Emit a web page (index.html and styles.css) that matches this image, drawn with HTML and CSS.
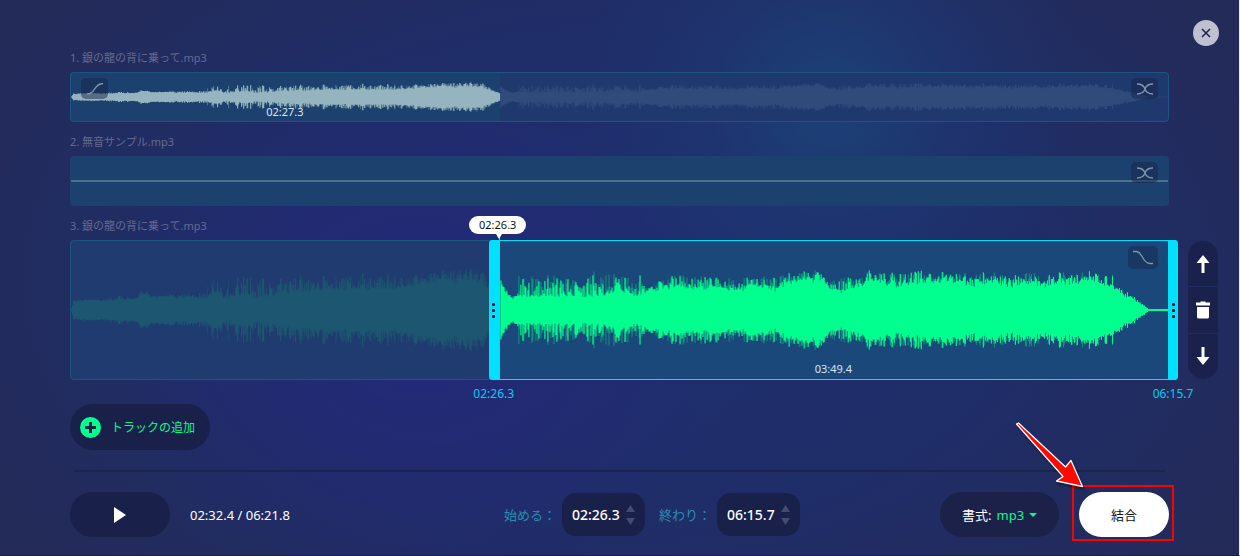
FILE: index.html
```html
<!DOCTYPE html>
<html lang="ja">
<head>
<meta charset="utf-8">
<title>Audio Joiner</title>
<link rel="stylesheet" href="styles.css">
</head>
<body>
<main class="editor">
  <button class="close" type="button" aria-label="閉じる">
    <svg width="10" height="10" viewBox="0 0 10 10"><path d="M1 1l8 8M9 1L1 9" stroke="#20264a" stroke-width="1.6" fill="none"/></svg>
  </button>

  <section class="track">
    <h2 class="track-title">1. 銀の龍の背に乗って.mp3</h2>
    <div class="clip clip-small clip-outlined">
      <div class="clip-part"></div>
      <svg class="wave" viewBox="0 0 1098 140" preserveAspectRatio="none" aria-hidden="true">
        <path class="wave-active-soft" data-from="1" data-to="430" data-peak="1"/>
        <path class="wave-active" data-from="1" data-to="430"/>
        <path class="wave-dim-soft" data-from="430" data-to="1098" data-peak="1"/>
        <path class="wave-dim" data-from="430" data-to="1098"/>
      </svg>
      <button class="fade fade-left" type="button" aria-label="フェードイン">
        <svg width="18" height="14" viewBox="0 0 18 14"><path d="M1 12c9 0 6-10 16-10.500"/></svg>
      </button>
      <button class="fade fade-right" type="button" aria-label="クロスフェード">
        <svg width="18" height="12" viewBox="0 0 18 12"><path d="M1 1c5 0 7 2 8 5s3 5 8 5M1 11c5 0 7-2 8-5s3-5 8-5"/></svg>
      </button>
      <span class="duration duration-part">02:27.3</span>
    </div>
  </section>

  <section class="track">
    <h2 class="track-title">2. 無音サンプル.mp3</h2>
    <div class="clip clip-small clip-silent">
      <div class="silence"></div>
      <button class="fade fade-right" type="button" aria-label="クロスフェード">
        <svg width="18" height="12" viewBox="0 0 18 12"><path d="M1 1c5 0 7 2 8 5s3 5 8 5M1 11c5 0 7-2 8-5s3-5 8-5"/></svg>
      </button>
    </div>
  </section>

  <section class="track">
    <h2 class="track-title">3. 銀の龍の背に乗って.mp3</h2>
    <div class="track-row">
      <div class="clip clip-large clip-outlined">
        <div class="selection"></div>
        <svg class="wave" viewBox="0 0 1098 140" preserveAspectRatio="none" aria-hidden="true">
          <path class="wave-muted-soft" data-from="1" data-to="430" data-peak="1"/>
          <path class="wave-muted" data-from="1" data-to="430"/>
          <path class="wave-green-soft" data-from="430" data-to="1098" data-peak="1"/>
          <path class="wave-green" data-from="430" data-to="1098"/>
        </svg>
        <div class="selection-frame">
          <div class="handle handle-start"><i></i><i></i><i></i><span class="handle-time">02:26.3</span></div>
          <div class="handle handle-end"><i></i><i></i><i></i><span class="handle-time">06:15.7</span></div>
          <div class="playhead"><span class="bubble">02:26.3</span></div>
          <button class="fade fade-large" type="button" aria-label="フェードアウト">
            <svg width="22" height="15" viewBox="0 0 22 15"><path d="M1 1.500h3c7 0 6 12 14 12h3"/></svg>
          </button>
          <span class="duration">03:49.4</span>
        </div>
      </div>
      <div class="tools">
        <button type="button" aria-label="上へ"><svg width="14" height="18" viewBox="0 0 14 18"><path d="M7 0l6.500 8H8.500v10h-3V8H.5z"/></svg></button>
        <button type="button" aria-label="削除"><svg width="14" height="18" viewBox="0 0 14 18"><path d="M4.500 0.500h5v1H14v3H0v-3h4.500zM1 6h12v10q0 1.500-1.500 1.500h-9Q1 17.500 1 16z"/></svg></button>
        <button type="button" aria-label="下へ"><svg width="14" height="18" viewBox="0 0 14 18"><path d="M7 18l6.500-8H8.500V0h-3v10H.5z"/></svg></button>
      </div>
    </div>
  </section>

  <button class="pill add" type="button">
    <svg width="21" height="21" viewBox="0 0 21 21"><circle cx="10.500" cy="10.500" r="10.500" fill="#00ff8f"/><path d="M10.500 5v11M5 10.500h11" stroke="#19204a" stroke-width="3"/></svg>
    トラックの追加
  </button>

  <hr class="divider">

  <footer class="bar">
    <div class="group">
      <button class="pill play" type="button" aria-label="再生"><svg width="12" height="16" viewBox="0 0 12 16"><path d="M0 0l12 8-12 8z" fill="#fff"/></svg></button>
      <span class="position">02:32.4 / 06:21.8</span>
    </div>
    <div class="group times">
      <label for="start">始める：</label>
      <div class="time-box">
        <input id="start" type="text" value="02:26.3">
        <div class="steps">
          <button type="button" aria-label="開始を増やす"><svg width="9" height="7" viewBox="0 0 9 7"><path d="M4.500 0L9 7H0z"/></svg></button>
          <button type="button" aria-label="開始を減らす"><svg width="9" height="7" viewBox="0 0 9 7"><path d="M4.500 7L9 0H0z"/></svg></button>
        </div>
      </div>
      <label for="end">終わり：</label>
      <div class="time-box">
        <input id="end" type="text" value="06:15.7">
        <div class="steps">
          <button type="button" aria-label="終了を増やす"><svg width="9" height="7" viewBox="0 0 9 7"><path d="M4.500 0L9 7H0z"/></svg></button>
          <button type="button" aria-label="終了を減らす"><svg width="9" height="7" viewBox="0 0 9 7"><path d="M4.500 7L9 0H0z"/></svg></button>
        </div>
      </div>
    </div>
    <div class="group output">
      <div class="pill format">
        <label for="format">書式:</label>
        <select id="format"><option>mp3</option></select>
        <svg width="8" height="4" viewBox="0 0 8 4" aria-hidden="true"><path d="M0 0h8L4 4z" fill="#00ff8f"/></svg>
      </div>
      <div class="merge-wrap">
        <button class="pill merge" type="button">結合</button>
        <div class="highlight"></div>
        <svg class="pointer" width="76" height="72" viewBox="0 0 76 72" aria-hidden="true"><path d="M2.500 5L4.500 4 51.500 48 57 41.500 68.500 67.500 42.500 62 49 57.500z" fill="#ff0a00" stroke="#fff" stroke-width="1.300" stroke-linejoin="round"/></svg>
      </div>
    </div>
  </footer>
</main>
<script src="wave.js"></script>
</body>
</html>
```
FILE: styles.css
```css
* { box-sizing: border-box; }

body {
  margin: 0;
  min-height: 100vh;
  font-family: "Noto Sans", "Noto Sans CJK JP", sans-serif;
  font-size: 13px;
  color: #fff;
  background:
    radial-gradient(circle 250px at 67% 18%, rgba(27, 72, 124, .75), rgba(29, 60, 120, .4) 50%, rgba(30, 50, 110, 0)),
    radial-gradient(ellipse 330px 270px at 34% 58%, rgba(36, 39, 124, .95), rgba(35, 41, 118, .6) 50%, rgba(32, 45, 106, 0)),
    radial-gradient(ellipse 58% 80% at 50% 50%, #1e2f6f, #1f2d68 55%, #232b59);
}

button, input, select { font: inherit; color: inherit; border: 0; padding: 0; margin: 0; background: none; }
button { cursor: pointer; }
svg { display: block; }

.editor {
  position: relative;
  min-height: 100vh;
  padding: 50px 70px 18px;
  border-right: 1px solid #e6e8f0;
  border-bottom: 1px solid #1a2148;
}

.close {
  position: absolute;
  top: 20px;
  right: 20px;
  width: 26px;
  height: 26px;
  border-radius: 50%;
  background: #bfc1d2;
  display: grid;
  place-items: center;
}

.track { margin-bottom: 12px; }
.track-title {
  margin: 0 0 6px;
  font-size: 11px;
  line-height: 16px;
  font-weight: 400;
  color: #646a91;
}

.track-row { display: flex; }
.clip { position: relative; flex: 1; border-radius: 4px; background: #1f396f; }
.clip-small { height: 50px; }
.clip-large { height: 140px; background: #203b70; }
.clip-outlined::after {
  content: "";
  position: absolute;
  inset: 0;
  border: 1px solid #1b5580;
  border-radius: 4px;
  pointer-events: none;
}
.clip-silent { background: #1d416e; display: flex; align-items: center; }
.silence { flex: 1; height: 2px; margin: 0 1px; background: #4e7190; }
.clip-part { position: absolute; inset: 0 auto 0 0; width: 39.100%; border-radius: 4px 0 0 4px; background: #1d416e; }

.wave { position: absolute; inset: 0; width: 100%; height: 100%; }
.wave-active { fill: #95b4bf; }
.wave-active-soft { fill: #517b92; }
.wave-dim { fill: #304b7b; }
.wave-dim-soft { fill: #274375; }
.wave-muted { fill: #1d5670; }
.wave-muted-soft { fill: #1e4a70; }
.wave-green { fill: #00ff8f; }
.wave-green-soft { fill: #12927f; }

.fade {
  position: absolute;
  top: 6px;
  width: 27px;
  height: 21px;
  border-radius: 5px;
  background: rgba(22, 38, 74, .5);
  display: grid;
  place-items: center;
}
.fade path { fill: none; stroke: #8295ac; stroke-width: 1.3; }
.fade-left { left: 11px; }
.fade-right { right: 11px; }
.fade-large { right: 20px; top: 5px; width: 30px; height: 23px; }

.duration {
  position: absolute;
  left: 0;
  right: 0;
  bottom: 2px;
  font-size: 11px;
  line-height: 16px;
  text-align: center;
  color: #d7e6f5;
}
.duration-part { right: auto; width: 39.100%; }

.selection { position: absolute; inset: 0 0 0 39%; background: #1a487a; }
.selection-frame {
  position: absolute;
  inset: 0 -9px 0 38.100%;
  z-index: 1;
  border: 1px solid #00e1ff;
  border-width: 1px 0;
  border-radius: 4px;
}
.handle {
  position: absolute;
  top: -1px;
  bottom: -1px;
  width: 10px;
  background: #00e1ff;
  display: flex;
  flex-direction: column;
  align-items: center;
  justify-content: center;
  gap: 3px;
}
.handle i { width: 3px; height: 3px; border-radius: 1px; background: #06162c; }
.handle-start { left: 0; border-radius: 4px 0 0 4px; }
.handle-end { right: 0; border-radius: 0 4px 4px 0; }
.handle-time {
  position: absolute;
  top: 100%;
  margin-top: 6px;
  font-size: 12px;
  line-height: 16px;
  color: #00d0f0;
}
.playhead { position: absolute; top: -7px; bottom: 0; left: 10px; width: 1px; background: #8aa3b8; }
.bubble {
  position: absolute;
  bottom: 100%;
  left: 50%;
  width: 57px;
  margin-left: -30px;
  border-radius: 9px;
  background: #fff;
  color: #111;
  font-size: 11px;
  line-height: 18px;
  text-align: center;
}
.bubble::after {
  content: "";
  position: absolute;
  top: 100%;
  left: 27px;
  border: 3px solid transparent;
  border-top: 5px solid #fff;
  border-bottom: 0;
}

.tools {
  display: flex;
  flex-direction: column;
  gap: 1px;
  width: 30px;
  margin: 1px -49px 1px 19px;
  border-radius: 15px;
  overflow: hidden;
}
.tools button { flex: 1; display: grid; place-items: center; background: #1a214c; }
.tools path { fill: #fff; }

.pill { height: 45px; border-radius: 23px; background: #19204a; }
.add {
  display: flex;
  align-items: center;
  gap: 10px;
  width: 140px;
  height: 46px;
  margin-top: 24px;
  padding-left: 10px;
  font-size: 12px;
  color: #00ff8f;
}

.divider { height: 2px; margin: 20px 4px; border: 0; background: #1b234f; }

.bar { display: grid; grid-template-columns: 1fr 436px auto; align-items: center; }
.group { display: flex; align-items: center; }
.play { width: 100px; display: grid; place-items: center; }
.position { margin-left: 20px; }

.times label { width: 58px; color: #2a8cae; white-space: nowrap; }
.time-box {
  display: flex;
  align-items: center;
  width: 83px;
  height: 43px;
  margin-right: 14px;
  padding-left: 10px;
  border-radius: 14px;
  background: #19204a;
}
.time-box input { width: 54px; font-size: 14px; font-weight: 500; outline: 0; }
.steps { display: grid; gap: 6px; }
.steps path { fill: #454c70; }

.output { gap: 20px; }
.format { display: flex; align-items: center; width: 119px; padding-left: 22px; background: #1b2149; }
.format select { appearance: none; width: 28px; margin-left: 5px; color: #00ff8f; }
.format svg { margin-left: 5px; }
.merge-wrap { position: relative; }
.merge { width: 90px; background: #fff; color: #111; display: block; }
.highlight { position: absolute; inset: -7px -5px -4px -7px; border: 2px solid #f00; pointer-events: none; }
.pointer { position: absolute; right: 79px; bottom: 46px; pointer-events: none; filter: drop-shadow(1px 2px 1px rgba(0, 0, 0, .5)); }
```
FILE: wave.js
```js
// Loudness envelope: [position, body half-height, peak half-height]
const envelope = [
  [0, 1, 1], [1, 1, 2], [3, 8, 9], [10, 8, 10], [20, 9, 12], [30, 9, 10], [38, 9, 13],
  [50, 10, 14], [60, 10, 13], [67, 12, 15], [71, 17, 21], [75, 16, 20],
  [80, 12, 14], [95, 12, 15], [100, 14, 18], [104, 12, 15], [135, 12, 17], [139, 15, 34], [150, 17, 27],
  [155, 10, 22], [160, 11, 38], [174, 16, 36], [185, 11, 30], [190, 12, 34], [205, 15, 26],
  [215, 18, 36], [240, 19, 33], [280, 21, 38], [330, 20, 35], [350, 26, 35],
  [375, 28, 40], [410, 29, 41], [420, 18, 24], [429, 9, 11],
  [430, 28, 36], [434, 19, 22], [440, 12, 14], [446, 12, 14], [448, 13, 35], [480, 14, 35],
  [515, 13, 30], [517, 14, 40], [550, 18, 35], [565, 15, 30], [569, 14, 40], [574, 15, 22], [590, 24, 31],
  [610, 21, 36], [650, 22, 33], [665, 18, 31], [680, 25, 33], [700, 20, 35], [720, 26, 37],
  [745, 32, 40], [757, 22, 29], [770, 18, 34], [780, 22, 34], [800, 29, 40], [830, 24, 36],
  [860, 26, 41], [875, 29, 37], [900, 25, 37], [925, 29, 38], [940, 21, 34],
  [960, 28, 38], [975, 22, 34], [990, 28, 38], [1000, 23, 37], [1020, 32, 39], [1030, 24, 34],
  [1041, 22, 36], [1044, 19, 23], [1052, 15, 21], [1060, 12, 15], [1068, 7, 10],
  [1077, 1, 1], [1098, 1, 1]
];

function sample(x, column) {
  let i = 1;
  while (i < envelope.length - 1 && envelope[i][0] <= x) i++;
  const a = envelope[i - 1];
  const b = envelope[i];
  return a[column] + (b[column] - a[column]) * (x - a[0]) / (b[0] - a[0]);
}

function noise(n) {
  const s = Math.sin(n * 127.1 + 11.7) * 43758.5453;
  return s - Math.floor(s);
}

const body = [];
const peak = [];
for (let x = 0; x < 1098; x++) {
  const low = sample(x, 1);
  const high = sample(x, 2);
  const spike = Math.pow(noise(x), 3);
  const swell = 0.86 + 0.14 * noise(Math.floor(x / 4) + 9000) + 0.18 * noise(x + 2000);
  const solid = Math.min(high, low * swell + (high - low) * spike);
  const tall = low + (high - low) * Math.pow(noise(x + 5000), 1.6);
  body.push(Math.max(1, solid));
  peak.push(Math.max(1, solid, tall));
}

document.querySelectorAll(".wave path").forEach(path => {
  const values = path.dataset.peak ? peak : body;
  const from = Number(path.dataset.from);
  const to = Number(path.dataset.to);
  let d = "";
  for (let x = from; x < to; x++) {
    const h = values[x];
    d += `M${x} ${(70 - h).toFixed(1)}h1v${(2 * h).toFixed(1)}h-1z`;
  }
  path.setAttribute("d", d);
});
```
